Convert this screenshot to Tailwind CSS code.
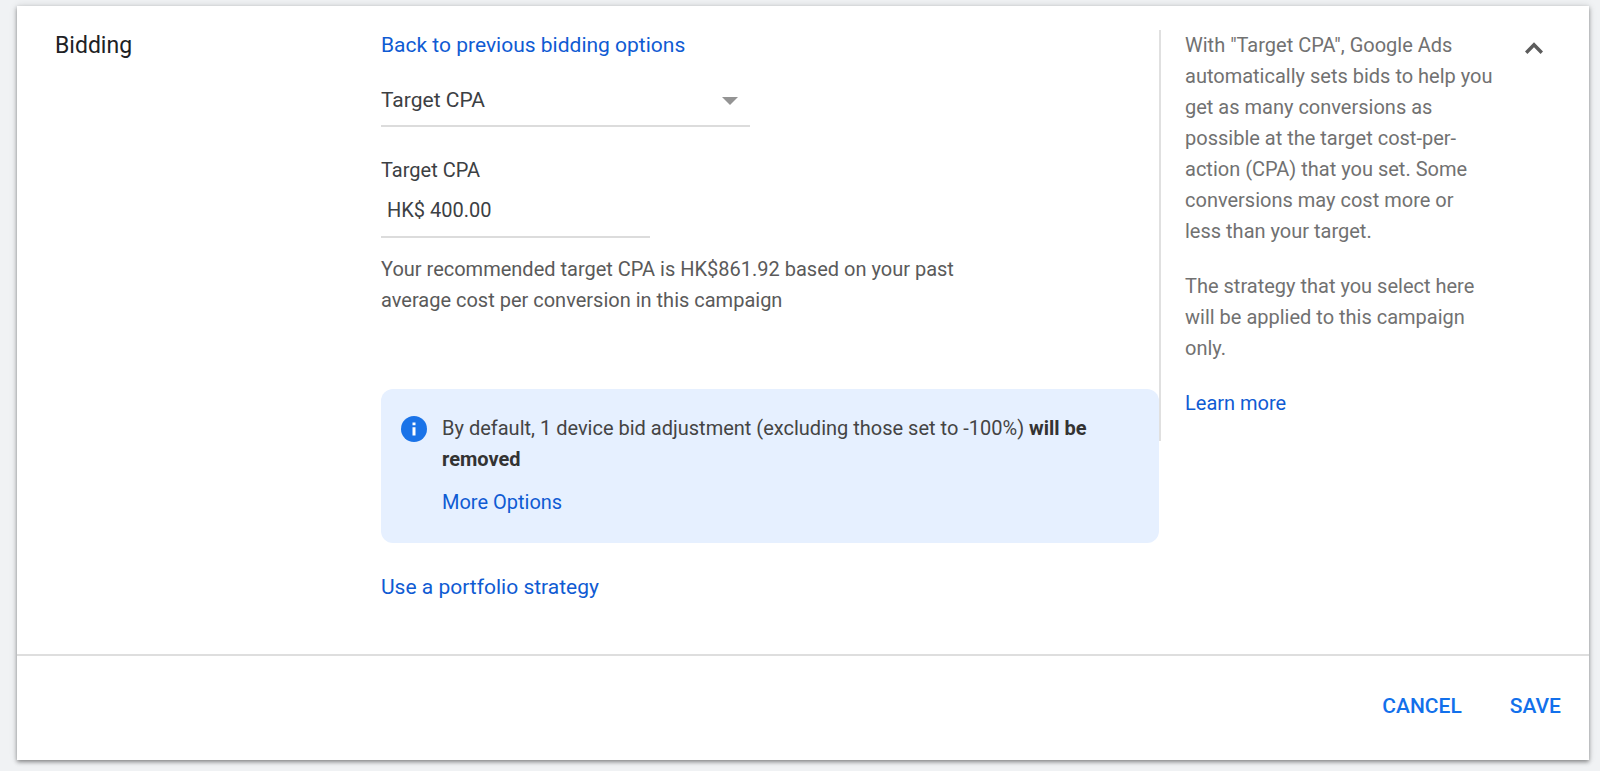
<!DOCTYPE html>
<html lang="en">
<head>
  <meta charset="UTF-8">
  <meta name="viewport" content="width=device-width, initial-scale=1.0">
  <title>Bidding</title>
  <script src="https://cdn.jsdelivr.net/npm/@tailwindcss/browser@4"></script>
</head>
<body class="min-h-screen bg-[#f0f2f4] pt-[6px] pb-3 pl-[17px] pr-[11px] font-[Roboto,'Liberation_Sans',sans-serif] text-[20px] leading-[31px]">
<div class="bg-white shadow-[0_2px_4px_rgba(0,0,0,0.4),0_0_8px_rgba(0,0,0,0.12)]">

  <section class="flex items-start pt-6 pb-[51px] pl-[38px] pr-[42px]">
    <h2 class="w-[326px] shrink-0 text-[23px] text-[#202124]">Bidding</h2>

    <!-- Bid strategy form -->
    <div class="min-w-0 flex-1">
      <a href="#" class="block w-fit text-[21px] text-[#0f5bd3]">Back to previous bidding options</a>

      <div class="relative mt-[14px] w-[369px] max-w-full">
        <select aria-label="Bid strategy" class="block h-[52px] w-full appearance-none border-b-2 border-[#dcdcdc] bg-transparent text-[21px] text-[#3c4043]">
          <option>Target CPA</option>
          <option>Maximise conversions</option>
        </select>
        <svg class="pointer-events-none absolute top-[22px] right-3 h-2 w-4" viewBox="0 0 16 8" fill="#949494"><path d="M0 0h16L8 8z"/></svg>
      </div>

      <label for="target-cpa" class="mt-7 block w-fit text-[#3c4043]">Target CPA</label>
      <input id="target-cpa" type="text" value="HK$ 400.00" class="block h-[52px] w-[269px] border-b-2 border-[#dcdcdc] bg-transparent px-[6px] pb-[2px] text-[#3c4043] outline-none">
      <p class="mt-4 max-w-[600px] text-[#5a5a5a]">Your recommended target CPA is HK$861.92 based on your past average cost per conversion in this campaign</p>

      <!-- Info message -->
      <div class="mt-[73px] flex gap-[15px] rounded-xl bg-[#e6f0ff] px-5 pt-6 pb-[25px]">
        <svg class="mt-[3px] h-[26px] w-[26px] shrink-0" viewBox="0 0 26 26"><circle cx="13" cy="13" r="13" fill="#1a73e8"/><path d="M11.500 6.500h3v2.800h-3zM11.500 11.300h3v8.200h-3z" fill="#fff"/></svg>
        <div>
          <p class="max-w-[660px] text-[#444]">By default, 1 device bid adjustment (excluding those set to -100%) <b class="font-bold text-[#333]">will be removed</b></p>
          <a href="#" class="mt-3 block w-fit text-[#0f5bd3]">More Options</a>
        </div>
      </div>

      <a href="#" class="mt-[29px] block w-fit text-[21px] text-[#0f5bd3]">Use a portfolio strategy</a>
    </div>

    <!-- Help text -->
    <aside class="flex w-[340px] shrink-0 flex-col gap-6 border-l-2 border-[#e0e0e0] pb-[22px] pl-6 text-[#717171]">
      <p>With "Target CPA", Google Ads automatically sets bids to help you get as many conversions as possible at the target cost-per-action (CPA) that you set. Some conversions may cost more or<br>less than your target.</p>
      <p>The strategy that you select here will be applied to this campaign only.</p>
      <a href="#" class="w-fit text-[#0f5bd3]">Learn more</a>
    </aside>

    <button type="button" aria-label="Collapse" class="mt-[5px] ml-[22px] flex h-[26px] w-[26px] shrink-0 items-center justify-center">
      <svg class="h-3 w-[18px]" viewBox="0 0 18 12" fill="none" stroke="#5c5c5c" stroke-width="3.400"><path d="M1.200 10.700L9 2.700l7.800 8"/></svg>
    </button>
  </section>

  <!-- Actions -->
  <footer class="flex items-center justify-end gap-12 border-t-2 border-[#dedede] pt-[35px] pb-[38px] pr-7 text-[21px] font-medium text-[#1270eb]">
    <button type="button">CANCEL</button>
    <button type="submit">SAVE</button>
  </footer>
</div>
</body>
</html>
